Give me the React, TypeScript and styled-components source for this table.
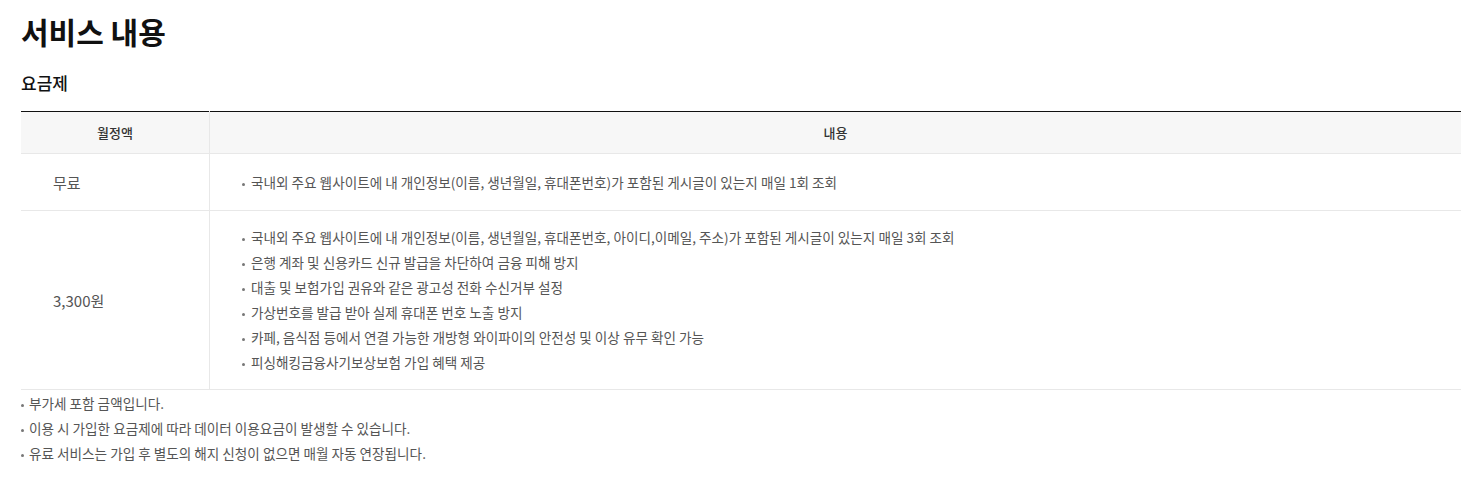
import styled, { createGlobalStyle } from 'styled-components';

const GlobalStyle = createGlobalStyle`
  body {
    margin: 0;
    background: #fff;
    font-family: "Noto Sans CJK KR", "Noto Sans", sans-serif;
    color: #333;
  }
`;

const Container = styled.div`
  padding: 10px 21px 0;
  width: 1440px;
`;

const Title = styled.h2`
  margin: 0;
  font-size: 30px;
  line-height: 42px;
  font-weight: 700;
  color: #111;
`;

const SubTitle = styled.h3`
  margin: 18px 0 0;
  font-size: 17px;
  line-height: 26px;
  font-weight: 500;
  color: #111;
`;

const Table = styled.table`
  width: 100%;
  margin-top: 15px;
  border-collapse: collapse;
  border-top: 1px solid #111;
  table-layout: fixed;
`;

const Row = styled.tr`
  height: 57px;
`;

const HeadCell = styled.th<{ $width?: number }>`
  width: ${p => (p.$width ? `${p.$width}px` : 'auto')};
  height: 41px;
  padding: 0;
  background: #f7f7f7;
  font-size: 13px;
  font-weight: 500;
  color: #333;
  text-align: center;
  border-bottom: 1px solid #e8e8e8;
  border-left: 1px solid #e8e8e8;
  &:first-child {
    border-left: none;
  }
`;

const PriceCell = styled.td`
  padding: 0 32px;
  font-size: 15px;
  color: #555;
  vertical-align: middle;
  border-bottom: 1px solid #e8e8e8;
`;

const ContentCell = styled.td`
  padding: 14px 32px 14px;
  border-left: 1px solid #e8e8e8;
  border-bottom: 1px solid #e8e8e8;
`;

const BulletList = styled.ul`
  margin: 0;
  padding: 0;
  list-style: none;
`;

const BulletItem = styled.li<{ $indent?: number }>`
  position: relative;
  padding-left: ${p => p.$indent ?? 9}px;
  font-size: 13.6px;
  line-height: 25px;
  color: #555;

  &::before {
    content: '';
    position: absolute;
    left: 0;
    top: 13px;
    width: 3px;
    height: 3px;
    border-radius: 50%;
    background: #777;
  }
`;

const Notes = styled(BulletList)`
  margin-top: 1px;
`;

const plans = [
  {
    price: '무료',
    items: [
      '국내외 주요 웹사이트에 내 개인정보(이름, 생년월일, 휴대폰번호)가 포함된 게시글이 있는지 매일 1회 조회',
    ],
  },
  {
    price: '3,300원',
    items: [
      '국내외 주요 웹사이트에 내 개인정보(이름, 생년월일, 휴대폰번호, 아이디,이메일, 주소)가 포함된 게시글이 있는지 매일 3회 조회',
      '은행 계좌 및 신용카드 신규 발급을 차단하여 금융 피해 방지',
      '대출 및 보험가입 권유와 같은 광고성 전화 수신거부 설정',
      '가상번호를 발급 받아 실제 휴대폰 번호 노출 방지',
      '카페, 음식점 등에서 연결 가능한 개방형 와이파이의 안전성 및 이상 유무 확인 가능',
      '피싱해킹금융사기보상보험 가입 혜택 제공',
    ],
  },
];

const notes = [
  '부가세 포함 금액입니다.',
  '이용 시 가입한 요금제에 따라 데이터 이용요금이 발생할 수 있습니다.',
  '유료 서비스는 가입 후 별도의 해지 신청이 없으면 매월 자동 연장됩니다.',
];

export default function App() {
  return (
    <>
      <GlobalStyle />
      <Container>
        <Title>서비스 내용</Title>
        <SubTitle>요금제</SubTitle>
        <Table>
          <thead>
            <tr>
              <HeadCell $width={188}>월정액</HeadCell>
              <HeadCell>내용</HeadCell>
            </tr>
          </thead>
          <tbody>
            {plans.map(plan => (
              <Row key={plan.price}>
                <PriceCell>{plan.price}</PriceCell>
                <ContentCell>
                  <BulletList>
                    {plan.items.map(item => (
                      <BulletItem key={item}>{item}</BulletItem>
                    ))}
                  </BulletList>
                </ContentCell>
              </Row>
            ))}
          </tbody>
        </Table>
        <Notes>
          {notes.map(note => (
            <BulletItem key={note} $indent={8}>{note}</BulletItem>
          ))}
        </Notes>
      </Container>
    </>
  );
}
